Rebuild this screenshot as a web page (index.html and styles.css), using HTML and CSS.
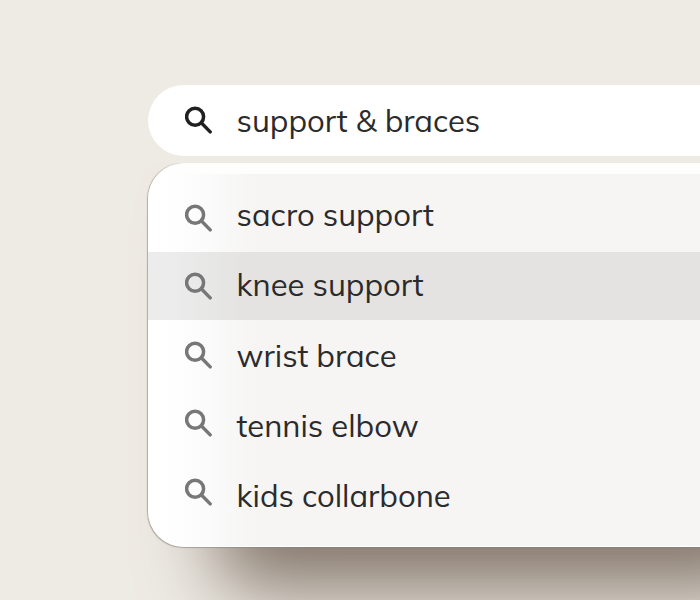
FILE: index.html
```
<!DOCTYPE html>
<html lang="en">
<head>
    <meta charset="UTF-8">
    <meta name="viewport" content="width=device-width, initial-scale=1.0">
    <title>Search</title>
    <link rel="stylesheet" href="styles.css">
</head>
<body>
    <svg width="0" height="0" class="sprite">
        <symbol id="search" viewBox="0 0 28 28">
            <circle cx="10.1" cy="10.7" r="8.5" fill="none" stroke="currentColor" stroke-width="3.5"/>
            <path d="M16.5 17L25.2 25.9" fill="none" stroke="currentColor" stroke-width="3.4" stroke-linecap="round"/>
        </symbol>
    </svg>
    <main class="search">
        <div class="search-bar">
            <svg class="icon"><use href="#search"/></svg>
            <span class="label query">support &amp; braces</span>
        </div>
        <ul class="suggestions">
            <li class="item sacro"><svg class="icon"><use href="#search"/></svg><span class="label">sacro support</span></li>
            <li class="item knee active"><svg class="icon"><use href="#search"/></svg><span class="label">knee support</span></li>
            <li class="item wrist"><svg class="icon"><use href="#search"/></svg><span class="label">wrist brace</span></li>
            <li class="item tennis"><svg class="icon"><use href="#search"/></svg><span class="label">tennis elbow</span></li>
            <li class="item kids"><svg class="icon"><use href="#search"/></svg><span class="label">kids collarbone</span></li>
        </ul>
    </main>
</body>
</html>
```
FILE: styles.css
```
* {
    box-sizing: border-box;
}

body {
    margin: 0;
    height: 600px;
    overflow: hidden;
    background: #eeebe4;
    color: #2b2b2c;
    font-family: Mulish, Lato, "Open Sans", sans-serif;
}

.sprite {
    display: block;
}

.search {
    margin: 85px 0 0 148px;
}

.search-bar {
    display: flex;
    align-items: flex-start;
    height: 71px;
    padding: 21px 37px 0;
    border-radius: 36px 0 0 36px;
    background: #fff;
}

.icon {
    flex: none;
    width: 28px;
    height: 28px;
    margin-right: 23.6px;
    color: #777;
}

.search-bar .icon {
    color: #202021;
}

.label {
    font-size: 31px;
    line-height: 40px;
    white-space: nowrap;
}

.query {
    margin-top: -5px;
}

.suggestions {
    height: 384px;
    margin: 7px 0 0;
    padding: 21px 0 0;
    list-style: none;
    border-radius: 36px 0 0 36px;
    background:
        linear-gradient(#fefefc, #fefefc) 0 0 / 100% 11px no-repeat,
        linear-gradient(to right, #fff 15px, #fbfbfb 60px, #f6f5f4 105px);
    box-shadow:
        inset 0 -1px #fff,
        -0.5px 0.5px 1px rgba(139, 128, 120, 0.6),
        68px 42px 75px #83756a;
    /* keeps the shadow below and to the left of the panel */
    clip-path: inset(0 -20px -100px -100px);
}

.item {
    display: flex;
    align-items: flex-start;
    height: 68.7px;
    padding: 20px 36px 0 37px;
}

.active {
    background: linear-gradient(to right, #ececec 20px, #e4e3e2 100px);
    background-size: 100% 68px;
    background-repeat: no-repeat;
}

.sacro {
    height: 68px;
}

.sacro .label {
    margin-top: -9px;
}

.knee .label {
    margin-top: -7px;
}

.wrist .label {
    margin-top: -5px;
}

.tennis .label {
    margin-top: -3px;
}

.kids .label {
    margin-top: -2px;
}
```
